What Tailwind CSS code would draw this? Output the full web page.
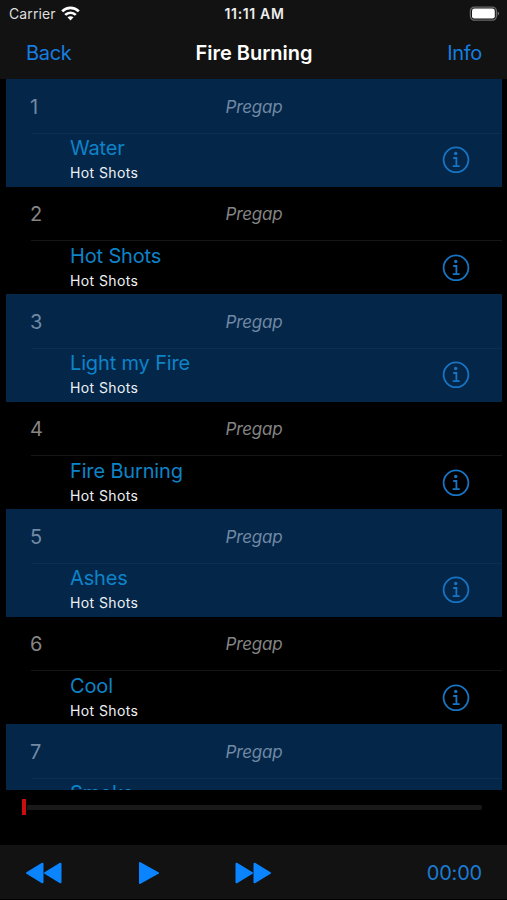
<!DOCTYPE html>
<html lang="en">
<head>
<meta charset="utf-8">
<title>Fire Burning</title>
<script src="https://cdn.jsdelivr.net/npm/@tailwindcss/browser@4"></script>
</head>
<body class="bg-black">
<div class="w-[507px] h-[900px] bg-black flex flex-col overflow-hidden font-['Inter',sans-serif]">
  <header class="h-[79px] shrink-0 bg-[#121212] text-white">
    <div class="h-[27px] grid grid-cols-3 items-center pl-[9px] pr-[7px]">
      <div class="flex items-center gap-[5px] text-[14px] text-[#dedede]">
        <span class="w-[47px] whitespace-nowrap tracking-[0.1px]">Carrier</span>
        <svg class="w-[19px] h-[15px]" viewBox="0 0 19 15" fill="none" stroke="#fff" stroke-width="2.7">
          <path d="M1.2 5.4C5.8.8 13.2.8 17.8 5.4"/><path d="M4.2 8.9c3-2.9 7.6-2.9 10.6 0"/><path d="M9.5 14.4 6.5 11.3c1.7-1.5 4.300-1.500 6 0z" fill="#fff" stroke="none"/>
        </svg>
      </div>
      <div class="text-center text-[14px] font-semibold tracking-[0.65px] text-[#ededed] whitespace-nowrap">11:11 AM</div>
      <svg class="w-[31px] h-[16px] justify-self-end" viewBox="0 0 31 16"><rect x="1.400" y="1.100" width="26" height="13" rx="4" fill="none" stroke="#6a6a6a" stroke-width="1.300"/><rect x="3" y="2.600" width="22.800" height="10" rx="2.400" fill="#fff"/><path d="M28.700 5.400q2.800 2.200 0 4.400z" fill="#747474"/></svg>
    </div>
    <div class="h-[51px] grid grid-cols-3 items-center pl-[26px] pr-[25px] text-[20px] text-[#157ee0]">
      <span class="tracking-[-0.3px]">Back</span>
      <h1 class="text-center text-white font-semibold tracking-[0px] whitespace-nowrap">Fire Burning</h1>
      <span class="text-right tracking-[-0.3px]">Info</span>
    </div>
  </header>
  <main id="tracks" class="h-[711px] shrink-0 ml-[6px] w-[496px] overflow-hidden"></main>
  <div class="h-[55px] shrink-0 pl-[22px] pr-[25px] pt-[9px] flex items-start">
    <div class="w-[4px] h-[16px] bg-[#cc0d0d]"></div>
    <div class="ml-[1px] mt-[6px] h-[5px] flex-1 bg-[#191919] rounded-r-[2px]"></div>
  </div>
  <footer class="h-[55px] shrink-0 bg-[#121212] flex items-center pt-[2px] pl-[25px] pr-[25px] border-b border-black text-[#0a84ff]">
    <svg class="w-[37px] h-[24px]" viewBox="0 0 37 24" fill="currentColor" stroke="currentColor" stroke-width="2" stroke-linejoin="round"><path d="M2 12 17.500 2.700v18.600zM20 12 35.500 2.700v18.600z"/></svg>
    <svg class="ml-[76px] w-[21px] h-[24px]" viewBox="0 0 21 24" fill="currentColor" stroke="currentColor" stroke-width="2" stroke-linejoin="round"><path d="M2 2 20 12 2 22z"/></svg>
    <svg class="ml-[75px] w-[37px] h-[24px]" viewBox="0 0 37 24" fill="currentColor" stroke="currentColor" stroke-width="2" stroke-linejoin="round"><path d="M2.500 2.700 18 12 2.500 21.300zM20.500 2.700 36 12 20.500 21.300z"/></svg>
    <span class="ml-auto text-[20px] tracking-[-0.2px] text-[#1b7bd4]">00:00</span>
  </footer>
</div>
<script>
const names = ["Water", "Hot Shots", "Light my Fire", "Fire Burning", "Ashes", "Cool", "Smoke"];
document.getElementById("tracks").innerHTML = names.map((name, i) => {
  const blue = i % 2 === 0;
  return `<section class="h-[107.5px] ${blue ? "bg-[#042649]" : "bg-black"}">
    <div class="h-[53.5px] grid grid-cols-[1fr_auto_1fr] items-center pt-[2px] pl-[24px] pr-[24px] ${blue ? "text-[#7189a4]" : "text-[#858585]"}">
      <span class="text-[20px]">${i + 1}</span><span class="pt-[1px] text-[17px] italic tracking-[-0.2px]">Pregap</span>
    </div>
    <div class="ml-[25px] h-[54px] border-t ${blue ? "border-[#0c2e50]" : "border-[#161616]"} pl-[39px] pr-[32px] flex items-center justify-between">
      <div class="pb-[1px]">
        <div class="text-[20px] leading-[27px] tracking-[-0.15px] text-[#0d83c8] whitespace-nowrap">${name}</div>
        <div class="text-[14px] leading-[22px] tracking-[0.4px] text-[#eef1f4]">Hot Shots</div>
      </div>
      <svg class="w-[28px] h-[28px]" viewBox="0 0 28 28" fill="none" stroke="#1873c2" stroke-width="1.800"><circle cx="14" cy="13.800" r="12.400"/><circle cx="13.700" cy="7.500" r="1.700" fill="#1873c2" stroke="none"/><path d="M11.200 12H14.400V20M10.700 20.200H17.700"/></svg>
    </div>
  </section>`;
}).join("");
</script>
</body>
</html>
